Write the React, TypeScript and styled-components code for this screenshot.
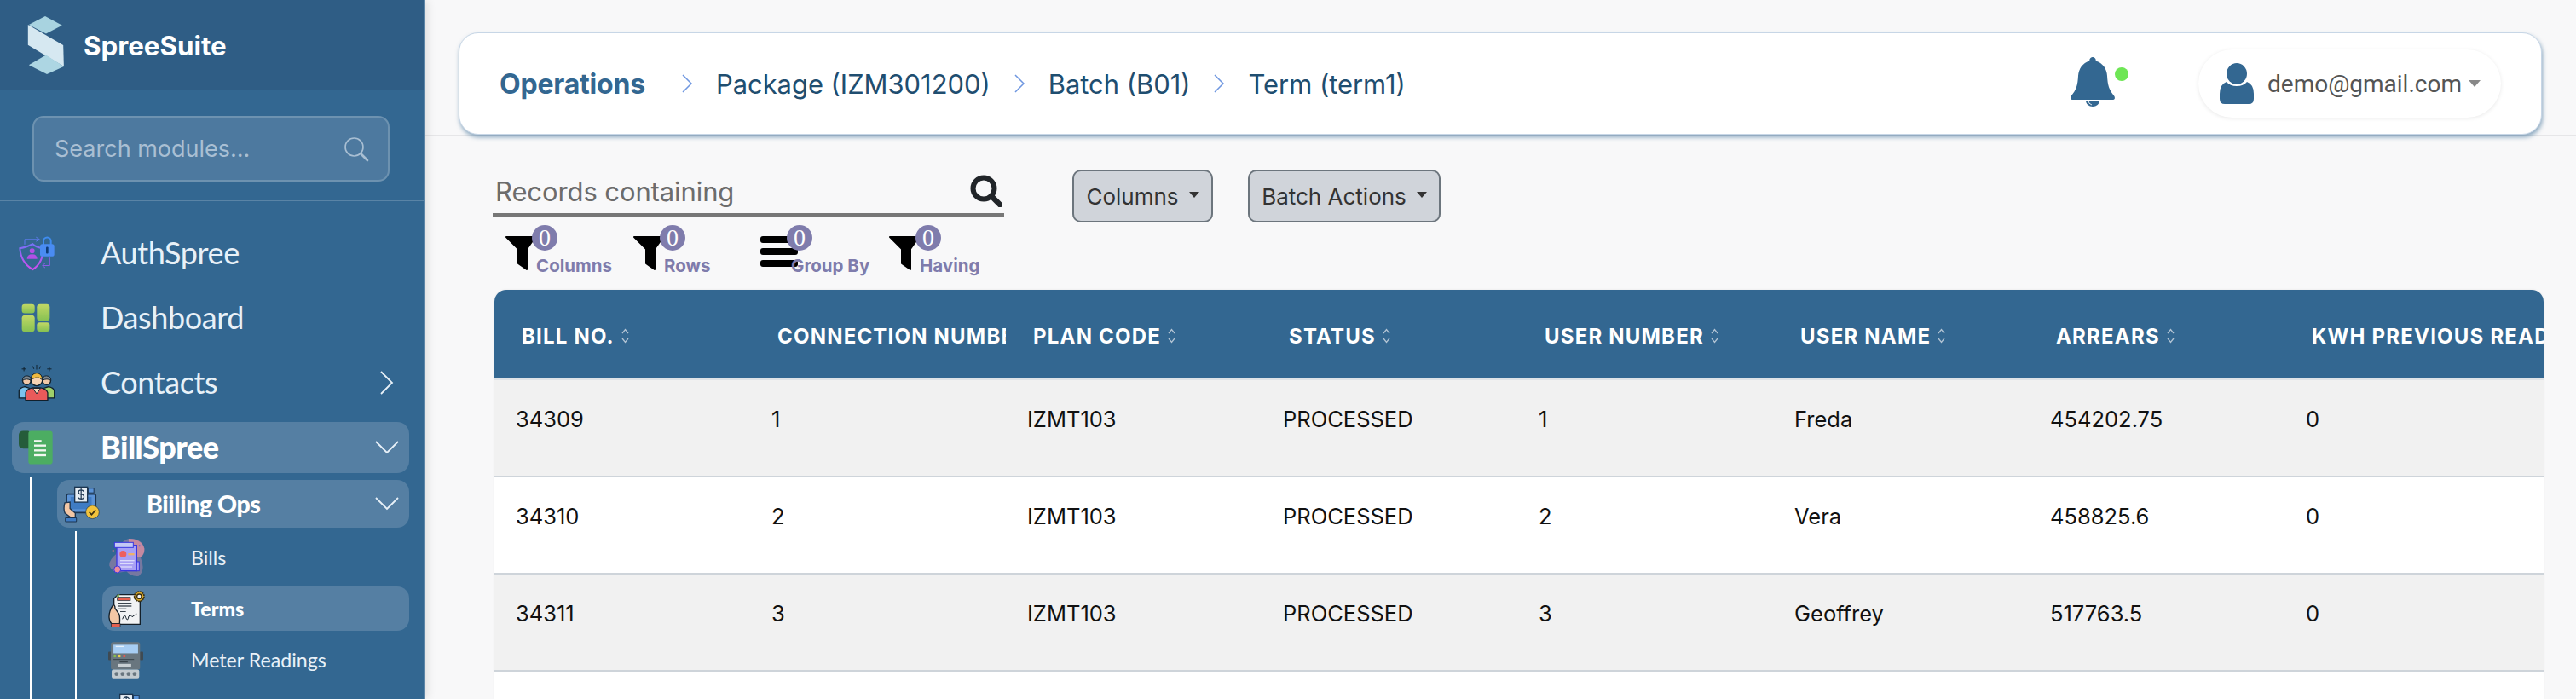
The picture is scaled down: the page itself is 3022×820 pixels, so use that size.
import React from "react";
import styled, { createGlobalStyle } from "styled-components";

const GlobalStyle = createGlobalStyle`
  html, body {
    margin: 0;
    padding: 0;
    height: 820px;
    overflow: hidden;
    background: #f8f8f9;
  }
  * { box-sizing: border-box; }
`;

const LogoMark = () => (
  <svg width="44" height="70" viewBox="95 52 130 208">
    <polygon points="157,55 216,87 160,116 100,85" fill="#a8d3e0" />
    <polygon points="97,85 220,156 222,230 97,155" fill="#d6e8f1" />
    <polygon points="100,225 160,190 222,230 163,257" fill="#add6e3" />
  </svg>
);

const AuthIcon = () => (
  <svg width="44" height="42" viewBox="60 50 132 125">
    <defs>
      <linearGradient id="shield" x1="0" y1="0" x2="0" y2="1">
        <stop offset="0" stopColor="#7670f5" />
        <stop offset="1" stopColor="#d04df0" />
      </linearGradient>
    </defs>
    <path d="M67 95 Q92 92 112 80 Q125 92 148 95 Q150 145 112 170 Q70 145 67 95Z" fill="none" stroke="url(#shield)" strokeWidth="6" />
    <circle cx="110" cy="104" r="9" fill="#b24fe6" />
    <path d="M92 133 Q92 116 110 116 Q128 116 128 133Z" fill="#b24fe6" />
    <path d="M84 82 V64 H134 M124 56 L136 64 L124 71" fill="none" stroke="#5f7cf2" strokeWidth="3" />
    <path d="M172 128 V156 H148 M156 148 L146 156 L156 164" fill="none" stroke="#8a5ee8" strokeWidth="3" />
    <path d="M150 84 V70 a13 13 0 0 1 26 0 V84" fill="none" stroke="#3f8cf0" strokeWidth="6" />
    <rect x="138" y="80" width="50" height="44" rx="8" fill="#4a8cf2" />
    <rect x="159" y="90" width="8" height="24" rx="3" fill="#0f3d78" />
  </svg>
);

const DashIcon = () => (
  <svg width="34" height="34" viewBox="75 290 102 104">
    <defs>
      <linearGradient id="dash" x1="0" y1="0" x2="0" y2="1">
        <stop offset="0" stopColor="#c2d865" />
        <stop offset="1" stopColor="#86c152" />
      </linearGradient>
    </defs>
    <g fill="url(#dash)">
      <rect x="76" y="292" width="46" height="33" rx="10" />
      <rect x="76" y="332" width="46" height="60" rx="11" />
      <rect x="130" y="292" width="46" height="60" rx="11" />
      <rect x="130" y="358" width="46" height="33" rx="10" />
    </g>
  </svg>
);

const ContactsIcon = () => (
  <svg width="44" height="44" viewBox="58 503 136 134">
    <g fill="none" stroke="#10202c" strokeWidth="3">
      <path d="M80 512 V528 M72 520 H88 M172 512 V528 M164 520 H180 M126 505 V522 M112 510 L116 520 M140 510 L136 520" />
    </g>
    <path d="M62 625 V600 Q64 588 82 584 L100 590 V625Z" fill="#7cc4ee" stroke="#10202c" strokeWidth="4" />
    <path d="M190 625 V600 Q188 588 170 584 L152 590 V625Z" fill="#9fd06a" stroke="#10202c" strokeWidth="4" />
    <circle cx="90" cy="562" r="15" fill="#f0c8a8" stroke="#10202c" strokeWidth="4" />
    <path d="M74 562 Q76 544 92 545 Q106 546 106 562 Q90 552 74 562Z" fill="#7d8790" stroke="#10202c" strokeWidth="3" />
    <circle cx="162" cy="562" r="15" fill="#f0c8a8" stroke="#10202c" strokeWidth="4" />
    <path d="M146 562 Q148 544 162 545 Q178 546 178 562 Q164 552 146 562Z" fill="#7d8790" stroke="#10202c" strokeWidth="3" />
    <path d="M86 634 V606 Q90 592 112 588 H140 Q162 592 166 606 V634Z" fill="#ea5a5a" stroke="#10202c" strokeWidth="4" />
    <circle cx="126" cy="560" r="21" fill="#f7d3b4" stroke="#10202c" strokeWidth="4" />
    <path d="M105 560 Q106 536 126 535 Q146 536 147 560 Q136 548 122 552 Q112 554 105 560Z" fill="#efb93f" stroke="#10202c" strokeWidth="3" />
    <path d="M112 590 L126 610 L140 590Z" fill="#f7d3b4" stroke="#10202c" strokeWidth="3" />
  </svg>
);

const BillSpreeIcon = () => (
  <svg width="40" height="40" viewBox="66 319 120 119">
    <path d="M100 320 H82 Q66 320 66 336 V366 Q66 382 82 382 H110 V330Z" fill="#255c3a" />
    <rect x="100" y="320" width="85" height="117" rx="10" fill="#4cad62" />
    <g fill="#f2f7f1">
      <rect x="120" y="352" width="26" height="7" />
      <rect x="120" y="368" width="42" height="7" />
      <rect x="120" y="385" width="42" height="7" />
      <rect x="120" y="402" width="42" height="7" />
    </g>
  </svg>
);

const BillingIcon = () => (
  <svg width="43" height="43" viewBox="42 212 126 126">
    <rect x="54" y="240" width="100" height="64" rx="6" fill="#5b93d6" stroke="#1c3550" strokeWidth="5" />
    <rect x="68" y="250" width="72" height="42" fill="#3f7cc4" />
    <rect x="128" y="220" width="20" height="16" fill="#5b93d6" stroke="#1c3550" strokeWidth="3" />
    <rect x="82" y="216" width="44" height="52" fill="#e6edf3" stroke="#1c3550" strokeWidth="4" />
    <path d="M114 232 Q110 226 104 226 Q95 226 95 233 Q95 240 104 241 Q114 242 114 250 Q114 257 104 257 Q97 257 93 251 M104 221 V262" fill="none" stroke="#1c3550" strokeWidth="3.500" />
    <path d="M48 270 Q42 290 48 305 L70 322 H84 V306 L66 290 V268Z" fill="#f3c7a5" stroke="#1c3550" strokeWidth="4" />
    <rect x="50" y="322" width="38" height="13" rx="2" fill="#3f7cc4" stroke="#1c3550" strokeWidth="3" />
    <circle cx="143" cy="302" r="23" fill="#f2c33c" stroke="#1c3550" strokeWidth="2" />
    <path d="M132 302 L140 311 L154 295" fill="none" stroke="#3a2f10" strokeWidth="5" />
  </svg>
);

const BillsIcon = () => (
  <svg width="44" height="45" viewBox="198 395 132 135">
    <path d="M270 395 Q300 392 318 412 Q336 440 312 462 Q330 505 306 526 Q280 530 262 510 Q215 522 202 490 Q200 470 225 450 Q235 405 270 395Z" fill="#8d7ea6" opacity=".75" />
    <path d="M270 395 Q315 395 325 430 Q325 455 305 462 L270 440Z" fill="#d98da0" opacity=".8" />
    <rect x="228" y="418" width="70" height="90" fill="#a9a0f5" stroke="#3a37e0" strokeWidth="4" />
    <rect x="220" y="408" width="66" height="18" fill="#c4c8f5" stroke="#3a37e0" strokeWidth="3" />
    <rect x="298" y="476" width="9" height="32" fill="#a9a0f5" stroke="#3a37e0" strokeWidth="3" />
    <circle cx="250" cy="449" r="12" fill="#ee5f5f" />
    <rect x="268" y="446" width="22" height="7" fill="#eeb06a" />
    <g fill="#dcdcfb">
      <rect x="240" y="470" width="50" height="4" />
      <rect x="240" y="481" width="46" height="4" />
      <rect x="240" y="492" width="42" height="4" />
    </g>
    <circle cx="230" cy="503" r="12" fill="#ef8b9c" stroke="#3a37e0" strokeWidth="3" />
    <circle cx="215" cy="437" r="3" fill="#e07a8a" />
    <circle cx="308" cy="420" r="3" fill="#5a5ae8" />
  </svg>
);

const TermsIcon = () => (
  <svg width="44" height="45" viewBox="198 575 132 135">
    <path d="M232 592 H310 V696 H218 V606Z" fill="#f1f3f4" stroke="#14202a" strokeWidth="4" />
    <path d="M226 596 L238 590 L236 604Z" fill="#8bbf6a" />
    <rect x="230" y="601" width="46" height="11" fill="#e5604f" stroke="#14202a" strokeWidth="2" />
    <g fill="#3a444c">
      <rect x="232" y="620" width="48" height="4" />
      <rect x="232" y="630" width="48" height="4" />
      <rect x="232" y="640" width="30" height="4" />
      <rect x="240" y="650" width="20" height="3" />
    </g>
    <path d="M248 678 Q256 655 260 672 Q266 690 270 668 Q276 660 282 670 Q290 664 298 660" fill="none" stroke="#14202a" strokeWidth="3" />
    <circle cx="307" cy="598" r="17" fill="#d8a92c" stroke="#3a2f10" strokeWidth="5" strokeDasharray="6 2" />
    <circle cx="307" cy="598" r="8" fill="#f1f3f4" stroke="#3a2f10" strokeWidth="4" />
    <path d="M215 628 Q200 650 201 672 Q203 688 210 694 H238 Q240 670 236 660 L222 640 Q222 628 215 628Z" fill="#f3c7a5" stroke="#14202a" strokeWidth="4" />
    <rect x="208" y="694" width="32" height="12" fill="#e5604f" stroke="#14202a" strokeWidth="2" />
  </svg>
);

const MeterIcon = () => (
  <svg width="41" height="43" viewBox="204 758 122 128">
    <rect x="204" y="792" width="12" height="30" rx="3" fill="#3f4a52" />
    <rect x="314" y="792" width="12" height="30" rx="3" fill="#3f4a52" />
    <rect x="213" y="759" width="102" height="96" rx="8" fill="#69767f" />
    <rect x="222" y="768" width="86" height="30" fill="#a7cdf3" />
    <rect x="230" y="772" width="30" height="4" fill="#e6f1fb" />
    <circle cx="227" cy="807" r="5" fill="#86bd4e" />
    <circle cx="243" cy="807" r="5" fill="#f0d34c" />
    <circle cx="260" cy="807" r="5" fill="#e8574f" />
    <rect x="222" y="818" width="72" height="3" fill="#39434a" />
    <rect x="244" y="825" width="28" height="5" fill="#39434a" />
    <rect x="238" y="835" width="46" height="11" fill="#c8cfd3" />
    <rect x="216" y="855" width="96" height="30" rx="6" fill="#c3cbd0" />
    <g fill="#69767f">
      <circle cx="233" cy="870" r="7" />
      <circle cx="254" cy="870" r="7" />
      <circle cx="275" cy="870" r="7" />
      <circle cx="296" cy="870" r="7" />
    </g>
  </svg>
);

const SearchGlyph = () => (
  <svg width="30" height="30" viewBox="0 0 30 30" fill="none" stroke="#a9bfd3">
    <circle cx="12.5" cy="12.5" r="10.5" strokeWidth="1.6" />
    <path d="M20 20 L28 28" strokeWidth="2.6" strokeLinecap="round" />
  </svg>
);

const ChevronRight = () => (
  <svg width="16" height="28" viewBox="0 0 16 28" fill="none" stroke="#e8f1f8" strokeWidth="1.8">
    <path d="M1 1 L14 14 L1 27" />
  </svg>
);

const ChevronDown = () => (
  <svg width="28" height="16" viewBox="0 0 28 16" fill="none" stroke="#e8f1f8" strokeWidth="1.8">
    <path d="M1 1 L14 14 L27 1" />
  </svg>
);

const CrumbArrow = () => (
  <svg width="14" height="22" viewBox="0 0 14 22" fill="none" stroke="#6f97e0" strokeWidth="1.5">
    <path d="M2 1 L12 11 L2 21" />
  </svg>
);

const BellIcon = () => (
  <svg width="54" height="58" viewBox="0 0 54 58">
    <path
      fill="#336791"
      d="M27 0 a3.5 3.5 0 0 1 3.5 4.6 C39 7 43.5 14 44 22 C44.6 33 46 38 52.5 46 Q54 50 50 50 H4 Q0 50 1.500 46 C8 38 9.400 33 10 22 C10.500 14 15 7 23.500 4.600 A3.5 3.5 0 0 1 27 0Z"
    />
    <path fill="#336791" d="M19 51 H35 C35 55 31.500 58 27 58 C22.500 58 19 55 19 51Z" />
    <path d="M22 51 Q22 55 26 56" fill="none" stroke="#dfe8f0" strokeWidth="1" />
  </svg>
);

const UserIcon = () => (
  <svg width="40" height="48" viewBox="0 0 40 48">
    <ellipse cx="20" cy="12.500" rx="12" ry="12.500" fill="#336791" />
    <path fill="#336791" d="M8 22 Q12 27 20 27 Q28 27 32 22 Q40 25 40 36 V42 Q40 48 34 48 H6 Q0 48 0 42 V36 Q0 25 8 22Z" />
  </svg>
);

const RecordsGlyph = () => (
  <svg width="38" height="38" viewBox="0 0 38 38" fill="none" stroke="#212529">
    <circle cx="16" cy="16" r="12.500" strokeWidth="6" />
    <path d="M25 25 L35 35" strokeWidth="6.500" strokeLinecap="round" />
  </svg>
);

const FunnelIcon = () => (
  <svg width="38" height="40" viewBox="0 0 38 40">
    <path fill="#000" stroke="#000" strokeWidth="2" strokeLinejoin="round" d="M1 1 H35 L25 15 V39 L15 32 V15Z" />
  </svg>
);

const BarsIcon = () => (
  <svg width="44" height="36" viewBox="0 0 44 36" fill="#000">
    <rect x="0" y="0" width="44" height="8" rx="3" />
    <rect x="0" y="14" width="44" height="8" rx="3" />
    <rect x="0" y="28" width="44" height="8" rx="3" />
  </svg>
);

const SortIcon = () => (
  <svg width="9" height="18" viewBox="0 0 9 18" fill="none" stroke="#b3c4d4" strokeWidth="1.3">
    <path d="M1 6 L4.500 1.500 L8 6 M1 12 L4.500 16.500 L8 12" />
  </svg>
);

const columns = [
  { label: "BILL NO.", sort: true },
  { label: "CONNECTION NUMBER", sort: false },
  { label: "PLAN CODE", sort: true },
  { label: "STATUS", sort: true },
  { label: "USER NUMBER", sort: true },
  { label: "USER NAME", sort: true },
  { label: "ARREARS", sort: true },
  { label: "KWH PREVIOUS READING", sort: false },
];

const rows = [
  ["34309", "1", "IZMT103", "PROCESSED", "1", "Freda", "454202.75", "0"],
  ["34310", "2", "IZMT103", "PROCESSED", "2", "Vera", "458825.6", "0"],
  ["34311", "3", "IZMT103", "PROCESSED", "3", "Geoffrey", "517763.5", "0"],
  ["", "", "", "", "", "", "", ""],
];

const filters = [
  { label: "Columns", icon: <FunnelIcon />, width: 150 },
  { label: "Rows", icon: <FunnelIcon />, width: 149 },
  { label: "Group By", icon: <BarsIcon />, width: 151 },
  { label: "Having", icon: <FunnelIcon />, width: 110 },
];

const crumbs = ["Package (IZM301200)", "Batch (B01)", "Term (term1)"];

const App: React.FC = () => {
  return (
    <Page>
      <GlobalStyle />
      <Sidebar>
        <Brand>
          <LogoMark />
          <BrandName>SpreeSuite</BrandName>
        </Brand>
        <SearchArea>
          <ModuleSearch>
            <span>Search modules...</span>
            <SearchGlyph />
          </ModuleSearch>
        </SearchArea>
        <Nav>
          <TopList>
            <TopRow>
              <IconSlot><AuthIcon /></IconSlot>
              <TopLabel>AuthSpree</TopLabel>
            </TopRow>
            <TopRow>
              <IconSlot $pad={4}><DashIcon /></IconSlot>
              <TopLabel>Dashboard</TopLabel>
            </TopRow>
            <TopRow>
              <IconSlot><ContactsIcon /></IconSlot>
              <TopLabel>Contacts</TopLabel>
              <RowChevron><ChevronRight /></RowChevron>
            </TopRow>
            <TopRow $active>
              <IconSlot $pad={1}><BillSpreeIcon /></IconSlot>
              <TopLabel $bold>BillSpree</TopLabel>
              <RowChevron><ChevronDown /></RowChevron>
            </TopRow>
          </TopList>
          <Tree>
            <GroupRow>
              <GroupIcon><BillingIcon /></GroupIcon>
              <GroupLabel>Biiling Ops</GroupLabel>
              <RowChevron><ChevronDown /></RowChevron>
            </GroupRow>
            <SubTree>
              <LeafRow>
                <LeafIcon><BillsIcon /></LeafIcon>
                <LeafLabel>Bills</LeafLabel>
              </LeafRow>
              <LeafRow $active>
                <LeafIcon><TermsIcon /></LeafIcon>
                <LeafLabel $bold>Terms</LeafLabel>
              </LeafRow>
              <LeafRow>
                <LeafIcon><MeterIcon /></LeafIcon>
                <LeafLabel>Meter Readings</LeafLabel>
              </LeafRow>
              <LeafRow>
                <LeafIcon><BillingIcon /></LeafIcon>
              </LeafRow>
            </SubTree>
          </Tree>
        </Nav>
      </Sidebar>
      <Main>
        <TopArea>
          <TopCard>
            <Crumbs>
              <RootCrumb>Operations</RootCrumb>
              {crumbs.map((c) => (
                <React.Fragment key={c}>
                  <CrumbArrow />
                  <Crumb>{c}</Crumb>
                </React.Fragment>
              ))}
            </Crumbs>
            <BellWrap>
              <BellIcon />
              <GreenDot />
            </BellWrap>
            <UserPill>
              <UserIcon />
              <UserMail>demo@gmail.com</UserMail>
              <UserCaret />
            </UserPill>
          </TopCard>
        </TopArea>
        <Content>
          <Controls>
            <FilterColumn>
              <RecordsBox>
                <span>Records containing</span>
                <RecordsGlyph />
              </RecordsBox>
              <FilterRow>
                {filters.map((f) => (
                  <FilterItem key={f.label} $width={f.width}>
                    {f.icon}
                    <Badge>0</Badge>
                    <FilterLabel>{f.label}</FilterLabel>
                  </FilterItem>
                ))}
              </FilterRow>
            </FilterColumn>
            <ActionButton $width={165}>Columns<BtnCaret /></ActionButton>
            <ActionButton $width={226}>Batch Actions<BtnCaret /></ActionButton>
          </Controls>
          <TableWrap>
            <Table>
              <thead>
                <tr>
                  {columns.map((col) => (
                    <HeadCell key={col.label}>
                      <HeadInner>
                        {col.label}
                        {col.sort && <SortIcon />}
                      </HeadInner>
                    </HeadCell>
                  ))}
                </tr>
              </thead>
              <tbody>
                {rows.map((row, i) => (
                  <BodyRow key={i} $odd={i % 2 === 0}>
                    {row.map((value, j) => (
                      <BodyCell key={j}>{value}</BodyCell>
                    ))}
                  </BodyRow>
                ))}
              </tbody>
            </Table>
          </TableWrap>
        </Content>
      </Main>
    </Page>
  );
};

const Page = styled.div`
  display: flex;
  width: 3022px;
  height: 820px;
  overflow: hidden;
  font-family: Inter, sans-serif;
`;

const Sidebar = styled.aside`
  flex: 0 0 498px;
  height: 820px;
  overflow: hidden;
  background: #336791;
  border-right: 1px solid #5d86a8;
  box-shadow: 3px 0 10px rgba(0, 0, 0, 0.12);
  z-index: 1;
`;

const Brand = styled.div`
  display: flex;
  align-items: center;
  gap: 22px;
  height: 106px;
  padding-left: 32px;
  background: #2f5d85;
`;

const BrandName = styled.div`
  font-size: 31.300px;
  font-weight: 700;
  color: #fff;
  margin-top: 2px;
`;

const SearchArea = styled.div`
  padding: 30px 40px 22px 38px;
  border-bottom: 1px solid #5a84a6;
`;

const ModuleSearch = styled.div`
  display: flex;
  align-items: center;
  justify-content: space-between;
  height: 77px;
  padding: 0 22px 0 24px;
  border: 2px solid #6d92b0;
  border-radius: 13px;
  background: #4d799f;
  font-size: 27px;
  color: #a9bfd3;
`;

const Nav = styled.nav`
  padding: 31px 17px 0 14px;
`;

const TopList = styled.div`
  display: flex;
  flex-direction: column;
  gap: 16px;
`;

const Row = styled.div<{ $active?: boolean }>`
  display: flex;
  align-items: center;
  border-radius: 14px;
  background: ${(p) => (p.$active ? "#557fa3" : "transparent")};
`;

const TopRow = styled(Row)`
  height: 60px;
  padding-left: 7px;
`;

const IconSlot = styled.div<{ $pad?: number }>`
  flex: 0 0 97px;
  display: flex;
  align-items: center;
  padding-left: ${(p) => p.$pad || 0}px;
`;

const TopLabel = styled.span<{ $bold?: boolean }>`
  margin-top: -2px;
  font-family: Lato, sans-serif;
  font-size: 36px;
  font-weight: ${(p) => (p.$bold ? 900 : 400)};
  color: ${(p) => (p.$bold ? "#fff" : "#e8f1f8")};
  letter-spacing: ${(p) => (p.$bold ? "-0.5px" : "-0.4px")};
`;

const RowChevron = styled.div`
  display: flex;
  justify-content: center;
  width: 28px;
  margin-left: auto;
  margin-right: 12px;
`;

const Tree = styled.div`
  margin: 4px 0 0 21px;
  padding: 4px 0 0 30px;
  border-left: 2px solid #fff;
`;

const GroupRow = styled(Row)`
  height: 56px;
  padding-left: 7px;
  background: #557fa3;
`;

const GroupIcon = styled.div`
  flex: 0 0 98px;
  display: flex;
  align-items: center;
`;

const GroupLabel = styled.span`
  font-family: Lato, sans-serif;
  font-size: 28.500px;
  font-weight: 900;
  letter-spacing: -0.4px;
  color: #fff;
`;

const SubTree = styled.div`
  display: flex;
  flex-direction: column;
  gap: 8px;
  margin: 4px 0 0 21px;
  padding: 5px 0 0 30px;
  border-left: 2px solid #fff;
`;

const LeafRow = styled(Row)`
  height: 52px;
  padding-left: 7px;
`;

const LeafIcon = styled.div`
  flex: 0 0 97px;
  display: flex;
  align-items: center;
`;

const LeafLabel = styled.span<{ $bold?: boolean }>`
  font-family: Lato, sans-serif;
  font-size: 23.200px;
  font-weight: ${(p) => (p.$bold ? 900 : 400)};
  color: ${(p) => (p.$bold ? "#fff" : "#e8f1f8")};
`;

const Main = styled.main`
  flex: 1;
  min-width: 0;
  display: flex;
  flex-direction: column;
`;

const TopArea = styled.header`
  height: 159px;
  padding: 38px 40px 0 40px;
  border-bottom: 1px solid #e6e6e8;
`;

const TopCard = styled.div`
  display: flex;
  align-items: center;
  height: 120px;
  padding: 0 47px 0 47px;
  background: #fff;
  border: 1px solid #c7d6e6;
  border-radius: 23px;
  box-shadow: 1px 3px 5px rgba(51, 103, 145, 0.55);
`;

const Crumbs = styled.div`
  display: flex;
  align-items: center;
  gap: 27px;
  flex: 1;
`;

const RootCrumb = styled.span`
  font-size: 32px;
  font-weight: 700;
  letter-spacing: -0.2px;
  color: #336791;
  margin-right: 15px;
`;

const Crumb = styled.span`
  font-size: 30.900px;
  font-weight: 400;
  color: #1f4e70;
`;

const BellWrap = styled.div`
  position: relative;
  display: flex;
  margin: 0 97px 4px 0;
`;

const GreenDot = styled.span`
  position: absolute;
  top: 12px;
  left: 53px;
  width: 16px;
  height: 16px;
  border-radius: 50%;
  background: #6ee655;
`;

const UserPill = styled.div`
  display: flex;
  align-items: center;
  height: 80px;
  padding: 0 24px 0 25px;
  border-radius: 40px;
  background: #fff;
  box-shadow: 0 1px 5px rgba(0, 0, 0, 0.09);
`;

const UserMail = styled.span`
  margin-left: 16px;
  font-family: Roboto, sans-serif;
  font-size: 28px;
  color: #555;
`;

const UserCaret = styled.span`
  width: 0;
  height: 0;
  margin-left: 8px;
  border-left: 7px solid transparent;
  border-right: 7px solid transparent;
  border-top: 8px solid #888;
`;

const Content = styled.section`
  flex: 1;
  min-height: 0;
  padding: 39px 38px 0 82px;
`;

const Controls = styled.div`
  display: flex;
  align-items: flex-start;
  gap: 41px;
  height: 142px;
`;

const FilterColumn = styled.div`
  width: 600px;
  margin: 0 39px 0 -2px;
`;

const RecordsBox = styled.div`
  display: flex;
  align-items: center;
  justify-content: space-between;
  height: 56px;
  padding: 0 2px 0 3px;
  border-bottom: 4px solid #777;
  font-size: 31px;
  letter-spacing: -0.1px;
  color: #6c6c6c;
`;

const FilterRow = styled.div`
  display: flex;
  margin: 10px 0 0 15px;
`;

const FilterItem = styled.div<{ $width: number }>`
  position: relative;
  display: flex;
  align-items: flex-start;
  flex: 0 0 ${(p) => p.$width}px;
  height: 54px;
  padding-top: 13px;
`;

const Badge = styled.span`
  position: absolute;
  top: 0;
  left: 31px;
  width: 30px;
  height: 30px;
  border-radius: 50%;
  background: #7f7cac;
  color: #fff;
  font-family: "Liberation Serif", serif;
  font-size: 28px;
  line-height: 30px;
  text-align: center;
`;

const FilterLabel = styled.span`
  position: absolute;
  top: 36px;
  left: 36px;
  font-size: 20.500px;
  font-weight: 700;
  line-height: 24px;
  color: #7f7cac;
  white-space: nowrap;
`;

const ActionButton = styled.div<{ $width: number }>`
  display: flex;
  align-items: center;
  justify-content: center;
  gap: 12px;
  width: ${(p) => p.$width}px;
  height: 62px;
  margin-top: 1px;
  background: #d0d4da;
  border: 2px solid #6c757d;
  border-radius: 10px;
  font-size: 26px;
  color: #333;
`;

const BtnCaret = styled.span`
  width: 0;
  height: 0;
  margin-top: -4px;
  border-left: 6px solid transparent;
  border-right: 6px solid transparent;
  border-top: 7px solid #333;
`;

const TableWrap = styled.div`
  width: 2404px;
  height: 480px;
  overflow: hidden;
  border-radius: 14px 14px 0 0;
  box-shadow: 0 0 3px rgba(0, 0, 0, 0.08);
`;

const Table = styled.table`
  width: 2404px;
  table-layout: fixed;
  border-collapse: separate;
  border-spacing: 0;
`;

const HeadCell = styled.th`
  width: 300px;
  height: 106px;
  padding: 0 0 2px 32px;
  overflow: hidden;
  background: #336791;
  border-bottom: 2px solid #dfe3e7;
  text-align: left;
  white-space: nowrap;

  &:last-child {
    width: 304px;
  }
`;

const HeadInner = styled.div`
  display: flex;
  align-items: center;
  gap: 8px;
  margin-top: 6px;
  font-size: 24px;
  font-weight: 700;
  letter-spacing: 1.2px;
  color: #fff;
`;

const BodyRow = styled.tr<{ $odd: boolean }>`
  background: ${(p) => (p.$odd ? "#f1f1f1" : "#fff")};
`;

const BodyCell = styled.td`
  height: 114px;
  padding: 30px 0 0 25px;
  vertical-align: top;
  border-bottom: 2px solid #ced4da;
  font-size: 25.500px;
  line-height: 32px;
  color: #111;
`;

export default App;
